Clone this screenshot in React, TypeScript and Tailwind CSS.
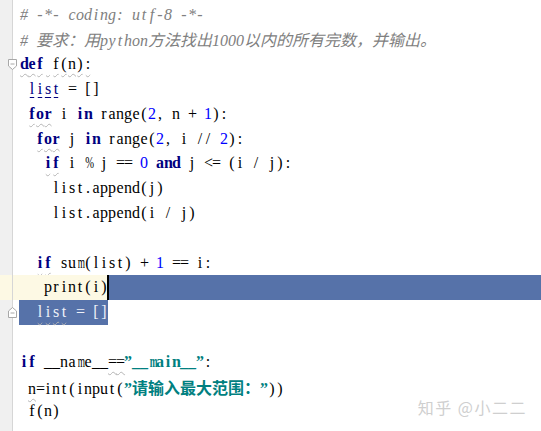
import React from "react";

type Tok = [string, string?];

const kw = "font-bold text-[#000080]";
const num = "text-[#0000ff]";
const str = "font-bold text-[#008080]";
const cm = "italic text-[#808080]";
const warn = "underline decoration-wavy decoration-[#b5b5b5] underline-offset-[4px] decoration-1";

const lines: Tok[][] = [
  [["# -*- coding: utf-8 -*-", cm]],
  [["# 要求：用python方法找出1000以内的所有完数，并输出。", cm]],
  [["def", kw + " " + warn], [" f(n):", warn]],
  [[" "], ["list", "text-[#000080] underline decoration-[#000080] underline-offset-[3px]"], [" = []"]],
  [[" "], ["for", kw + " " + warn], [" i "], ["in", kw], [" range("], ["2", num], [", n + "], ["1", num], ["):"]],
  [["  "], ["for", kw + " " + warn], [" j "], ["in", kw], [" range("], ["2", num], [", i // "], ["2", num], ["):"]],
  [["   "], ["if", kw + " " + warn], [" i % j == "], ["0", num], [" "], ["and", kw], [" j <= (i / j):"]],
  [["    list.append(j)"]],
  [["    list.append(i / j)"]],
  [],
  [["  "], ["if", kw + " " + warn], [" sum(list) + "], ["1", num], [" == i:"]],
  [],
  [],
  [],
  [["if", kw], [" __name__"], ["==", warn], ["”__main__”", str], [":"]],
  [[" "], ["n", warn], ["=int(input("], ["”请输入最大范围：”", str], ["))"]],
  [[" f(n)"]],
];

function Chars({ text, cls }: { text: string; cls?: string }) {
  return (
    <>
      {Array.from(text).map((c, i) => {
        const code = c.charCodeAt(0);
        if (code > 0x2e80) {
          return (
            <span
              key={i}
              className={
                "inline-block w-[16px] text-[16px] [font-family:'Noto_Sans_CJK_SC',sans-serif] " +
                (cls ?? "")
              }
            >
              {c}
            </span>
          );
        }
        let extra = "";
        if (c === "m") extra = " scale-x-[0.58]";
        else if (c === "%" || c === "w") extra = " scale-x-[0.66]";
        return (
          <span key={i} className={"inline-block w-[8px] text-center " + (cls ?? "") + extra}>
            {c}
          </span>
        );
      })}
    </>
  );
}

function Toks({ toks }: { toks: Tok[] }) {
  return (
    <>
      {toks.map((t, i) => (
        <Chars key={i} text={t[0]} cls={t[1]} />
      ))}
    </>
  );
}

function FoldOpen() {
  return (
    <svg width="9" height="11" viewBox="0 0 9 11" className="absolute left-[8px] top-[7px]">
      <path d="M0.5 0.5 H8.5 V7 L4.5 10.5 L0.5 7 Z" fill="#ffffff" stroke="#a8a8a8" />
      <path d="M2.5 5 H6.5" stroke="#a8a8a8" />
    </svg>
  );
}

function FoldEnd() {
  return (
    <svg width="9" height="11" viewBox="0 0 9 11" className="absolute left-[8px] top-[7px]">
      <path d="M0.5 10.5 H8.5 V4 L4.5 0.5 L0.5 4 Z" fill="#ffffff" stroke="#a8a8a8" />
      <path d="M2.5 6 H6.5" stroke="#a8a8a8" />
    </svg>
  );
}

function Gutter({ yellow, children }: { yellow?: boolean; children?: React.ReactNode }) {
  return (
    <div
      className={
        "relative w-[13px] shrink-0 border-r border-[#d6d6d6] " +
        (yellow ? "bg-[#fdf9e4]" : "bg-[#f0f0f0]")
      }
    >
      {children}
    </div>
  );
}

export default function App() {
  return (
    <div className="relative w-[541px] h-[431px] overflow-hidden bg-white flex flex-col [font-family:'Liberation_Serif','Noto_Sans_CJK_SC',serif] text-[16px] text-black">
      <div className="flex h-[2.6px] shrink-0">
        <Gutter />
      </div>
      {lines.map((toks, i) => {
        if (i === 11) {
          return (
            <div key={i} className="flex h-[24.8px] leading-[24.8px] shrink-0 bg-[#fdf9e4]">
              <Gutter yellow />
              <div className="flex flex-1 pl-[7px] whitespace-pre">
                <span>
                  <Chars text="   print(i)" />
                </span>
                <div className="flex-1 bg-[#5672a9] border-l-2 border-black -ml-[1px]" />
              </div>
            </div>
          );
        }
        if (i === 12) {
          return (
            <div key={i} className="flex h-[24.8px] leading-[24.8px] shrink-0">
              <Gutter>
                <FoldEnd />
              </Gutter>
              <div className="flex flex-1 pl-[6px] whitespace-pre">
                <span className="bg-[#5672a9] pl-[1px] text-[#eef1f8]">
                  <Chars text="  " />
                  <Chars text="list" cls={warn} />
                  <Chars text=" = []" />
                </span>
              </div>
            </div>
          );
        }
        return (
          <div key={i} className="flex h-[24.8px] leading-[24.8px] shrink-0">
            <Gutter>{i === 2 ? <FoldOpen /> : null}</Gutter>
            <div className="flex-1 pl-[7px] whitespace-pre">
              <Toks toks={toks} />
            </div>
          </div>
        );
      })}
      <div className="flex flex-1">
        <Gutter />
      </div>
      <div className="absolute right-[14px] bottom-[12px] text-[16px] tracking-[1.5px] text-[#cfcfcf] [font-family:'Noto_Sans_CJK_SC',sans-serif]">
        知乎 @小二二
      </div>
    </div>
  );
}
